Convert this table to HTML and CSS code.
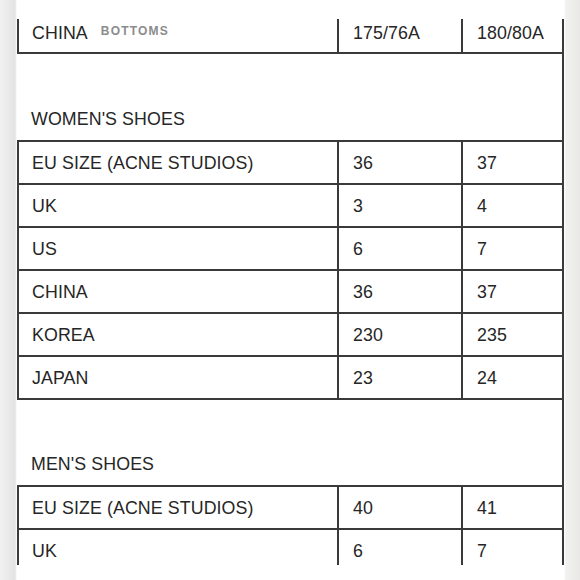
FILE: index.html
```html
<!DOCTYPE html>
<html lang="en">
<head>
<meta charset="utf-8">
<title>Size guide</title>
<link rel="stylesheet" href="styles.css">
</head>
<body>
<div class="page">
  <div class="sheet">
    <div class="table">
      <div class="row row-cut-top">
        <div class="cell">CHINA<span class="tag">BOTTOMS</span></div>
        <div class="cell">175/76A</div>
        <div class="cell">180/80A</div>
      </div>
    </div>

    <h2 class="heading">WOMEN'S SHOES</h2>
    <div class="table table-top">
      <div class="row"><div class="cell">EU SIZE (ACNE STUDIOS)</div><div class="cell">36</div><div class="cell">37</div></div>
      <div class="row"><div class="cell">UK</div><div class="cell">3</div><div class="cell">4</div></div>
      <div class="row"><div class="cell">US</div><div class="cell">6</div><div class="cell">7</div></div>
      <div class="row"><div class="cell">CHINA</div><div class="cell">36</div><div class="cell">37</div></div>
      <div class="row"><div class="cell">KOREA</div><div class="cell">230</div><div class="cell">235</div></div>
      <div class="row"><div class="cell">JAPAN</div><div class="cell">23</div><div class="cell">24</div></div>
    </div>

    <h2 class="heading heading-men">MEN'S SHOES</h2>
    <div class="table table-top">
      <div class="row"><div class="cell">EU SIZE (ACNE STUDIOS)</div><div class="cell">40</div><div class="cell">41</div></div>
      <div class="row"><div class="cell">UK</div><div class="cell">6</div><div class="cell">7</div></div>
    </div>
  </div>
</div>
</body>
</html>
```

FILE: styles.css
```css
* {
  box-sizing: border-box;
}

html, body {
  margin: 0;
  padding: 0;
}

body {
  width: 580px;
  height: 580px;
  overflow: hidden;
  background: linear-gradient(to right, #f1f1f1 0px, #e3e3e3 15px, #ffffff 17px, #ffffff 564px, #f1f1f1 566px, #e9e8e6 580px);
  font-family: "Liberation Sans", Arial, Helvetica, sans-serif;
  color: #262626;
}

.page {
  padding-top: 19px;
  padding-left: 17px;
}

.sheet {
  width: 547px;
  height: 546px;
  overflow: hidden;
  border-right: 2px solid #3a3a3a;
  background: #ffffff;
}

.table {
  border-left: 2px solid #3a3a3a;
}

.table-top {
  border-top: 2px solid #3a3a3a;
}

.row {
  display: grid;
  grid-template-columns: 320px 124px 1fr;
  height: 43px;
  border-bottom: 2px solid #3a3a3a;
}

.row-cut-top {
  height: 35px;
}

.row-cut-top .cell {
  padding-bottom: 5px;
}

.cell {
  display: flex;
  align-items: center;
  padding-left: 14px;
  font-size: 17.8px;
  line-height: 20px;
  letter-spacing: 0.1px;
  white-space: nowrap;
}

.cell:first-child {
  padding-left: 13px;
}

.cell:nth-child(1),
.cell:nth-child(2) {
  border-right: 2px solid #3a3a3a;
}

.tag {
  align-self: flex-start;
  margin-left: 13px;
  margin-top: 6px;
  font-size: 12px;
  line-height: 12px;
  letter-spacing: 1.2px;
  color: #8c8c8c;
  font-weight: 600;
}

.heading {
  margin: 0;
  padding: 55px 0 11px 14px;
  font-size: 17.8px;
  line-height: 20px;
  letter-spacing: 0.1px;
  font-weight: normal;
  color: #262626;
}

.heading-men {
  padding-top: 54px;
}
```
